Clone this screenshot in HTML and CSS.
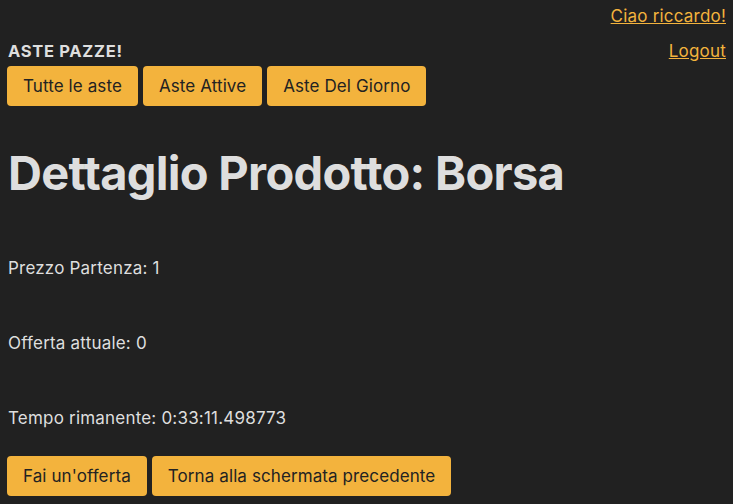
FILE: index.html
```html
<!DOCTYPE html>
<html lang="it">
<head>
<meta charset="utf-8">
<title>Dettaglio Prodotto</title>
<link rel="stylesheet" href="styles.css">
</head>
<body>
  <header class="top">
    <div class="greet"><a href="#">Ciao riccardo!</a></div>
    <div class="brand-row">
      <span class="brand">ASTE PAZZE!</span>
      <a href="#">Logout</a>
    </div>
    <nav class="nav">
      <button class="btn">Tutte le aste</button>
      <button class="btn">Aste Attive</button>
      <button class="btn">Aste Del Giorno</button>
    </nav>
  </header>
  <main class="detail">
    <h1 class="title">Dettaglio Prodotto: Borsa</h1>
    <div class="info">
      <p>Prezzo Partenza: 1</p>
      <p>Offerta attuale: 0</p>
      <p>Tempo rimanente: 0:33:11.498773</p>
    </div>
    <div class="actions">
      <button class="btn">Fai un'offerta</button>
      <button class="btn">Torna alla schermata precedente</button>
    </div>
  </main>
</body>
</html>
```
FILE: styles.css
```css
html, body {
  background: #212121;
}
body {
  margin: 0;
  padding: 0 7px 0 8px;
  color: #dedede;
  font-family: Inter, "Noto Sans", sans-serif;
  font-size: 17px;
  letter-spacing: 0.2px;
  line-height: 24px;
}
a {
  color: #f3b33d;
  text-decoration: underline;
}
.greet {
  margin-top: 4px;
  text-align: right;
}
.brand-row {
  margin-top: 11px;
  display: flex;
  justify-content: space-between;
  align-items: baseline;
}
.brand {
  font-weight: 700;
  font-size: 16.5px;
  letter-spacing: 0.7px;
}
.nav {
  margin-top: 3px;
  display: flex;
  gap: 5px;
}
.btn {
  font-family: inherit;
  font-size: 17px;
  letter-spacing: 0.1px;
  line-height: 24px;
  color: #222;
  background: #f3b33d;
  border: none;
  border-radius: 4px;
  padding: 8px 16px;
  margin: 0;
  margin-left: -1px;
}
.btn + .btn {
  margin-left: 0;
}
.title {
  margin: 38px 0 0;
  font-size: 47px;
  letter-spacing: -0.7px;
  line-height: 57px;
  font-weight: 700;
}
.info {
  margin-top: 55px;
  display: flex;
  flex-direction: column;
  gap: 51px;
}
.info p {
  margin: 0;
}
.actions {
  margin-top: 26px;
  display: flex;
  gap: 5px;
}
```
